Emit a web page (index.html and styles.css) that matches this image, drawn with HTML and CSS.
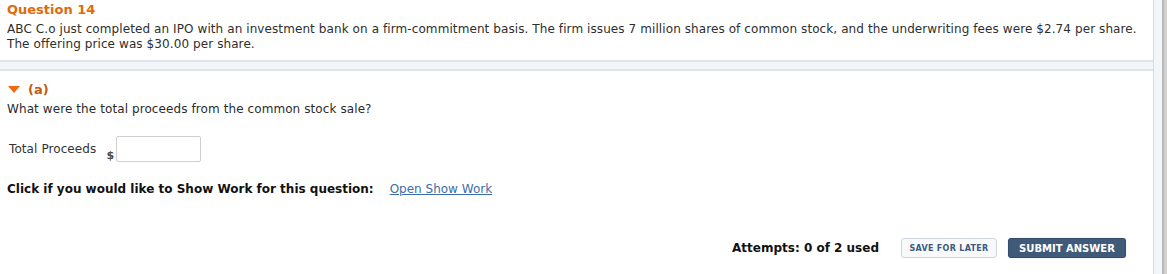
FILE: index.html
```html
<!DOCTYPE html>
<html>
<head>
<meta charset="utf-8">
<link rel="stylesheet" href="styles.css">
</head>
<body>
<div class="layout">
  <div class="main">
    <div class="qbox">
      <div class="qtitle">Question 14</div>
      <p class="qtext">ABC C.o just completed an IPO with an investment bank on a firm-commitment basis. The firm issues 7 million shares of common stock, and the underwriting fees were $2.74 per share. The offering price was $30.00 per share.</p>
    </div>
    <div class="partbox">
      <div class="parthead"><span class="tri"></span><span class="plabel">(a)</span></div>
      <p class="ptext">What were the total proceeds from the common stock sale?</p>
      <div class="answer">
        <span class="alabel">Total Proceeds</span>
        <span class="dollar">$</span>
        <span class="inputbox"></span>
      </div>
      <div class="showwork">
        <span class="swlabel">Click if you would like to Show Work for this question:</span>
        <a class="swlink" href="#">Open Show Work</a>
      </div>
      <div class="actions">
        <span class="attempts">Attempts: 0 of 2 used</span>
        <span class="btn save">SAVE FOR LATER</span>
        <span class="btn submit">SUBMIT ANSWER</span>
      </div>
    </div>
  </div>
  <div class="gutter"></div>
  <div class="scroll"></div>
</div>
</body>
</html>
```
FILE: styles.css
```css
html, body {
  margin: 0;
  padding: 0;
  height: 100%;
}
body {
  background: #ffffff;
  font-family: "DejaVu Sans", Verdana, sans-serif;
  color: #2b2b2b;
  font-size: 12px;
}
.layout {
  display: flex;
  height: 274px;
  overflow: hidden;
}
.main {
  width: 1153px;
  background: #f3f6f9;
  border-right: 1px solid #d3dbe4;
  display: flex;
  flex-direction: column;
  gap: 7px;
}
.gutter {
  width: 8px;
  background: #f3f6f9;
}
.scroll {
  width: 5px;
  background: linear-gradient(to right, #b9b9b9 0, #b9b9b9 2px, #d2d2d2 2px);
}
.qbox {
  background: #fff;
  border-bottom: 2px solid #dde4ec;
  padding: 2px 7px 8px;
}
.qtitle {
  color: #e0690c;
  font-weight: bold;
  font-size: 13px;
  line-height: 16px;
}
.qtext {
  margin: 4px 0 0;
  line-height: 15px;
  color: #2e2e2e;
  letter-spacing: 0.09px;
}
.partbox {
  flex: 1;
  background: #fff;
  border-top: 2px solid #dde4ec;
  padding: 10px 7px 0;
}
.parthead {
  display: flex;
  align-items: center;
  gap: 8px;
  height: 16px;
}
.tri {
  width: 0;
  height: 0;
  border-left: 6px solid transparent;
  border-right: 6px solid transparent;
  border-top: 7px solid #f26a10;
  margin-left: 1px;
}
.plabel {
  color: #c25a16;
  font-weight: bold;
  font-size: 13px;
}
.ptext {
  margin: 5px 0 0;
  line-height: 15px;
  letter-spacing: 0.09px;
}
.answer {
  display: flex;
  align-items: flex-start;
  margin-top: 19px;
  padding-left: 2px;
  height: 27px;
}
.alabel {
  margin-top: 6px;
  line-height: 15px;
  color: #333;
  letter-spacing: 0.09px;
}
.dollar {
  margin-left: 10px;
  margin-top: 14px;
  font-size: 11px;
  line-height: 12px;
  font-weight: bold;
  color: #4a4a4a;
}
.inputbox {
  width: 83px;
  height: 24px;
  border: 1px solid #cfcfcf;
  border-radius: 2px;
  margin-left: 2px;
  background: #fff;
}
.showwork {
  display: flex;
  align-items: center;
  margin-top: 19px;
}
.swlabel {
  font-weight: bold;
  color: #111;
  font-size: 12px;
}
.swlink {
  margin-left: 16px;
  color: #3b6ea8;
  font-size: 12px;
}
.actions {
  display: flex;
  align-items: center;
  justify-content: flex-end;
  margin-top: 42px;
  padding-right: 20px;
}
.attempts {
  font-weight: bold;
  color: #111;
  font-size: 12px;
  margin-right: 22px;
}
.btn {
  display: inline-flex;
  align-items: center;
  justify-content: center;
  height: 20px;
  border-radius: 3px;
  font-weight: bold;
  box-sizing: border-box;
}
.save {
  width: 96px;
  font-size: 8px;
  letter-spacing: 0.3px;
  color: #3d5a80;
  background: #f7f9fb;
  border: 1px solid #cdd6e0;
}
.submit {
  width: 118px;
  margin-left: 11px;
  font-size: 10px;
  color: #fff;
  background: #3f5b79;
  border: 1px solid #334d69;
  box-shadow: 0 0 1px #8aa0b8;
}
```
